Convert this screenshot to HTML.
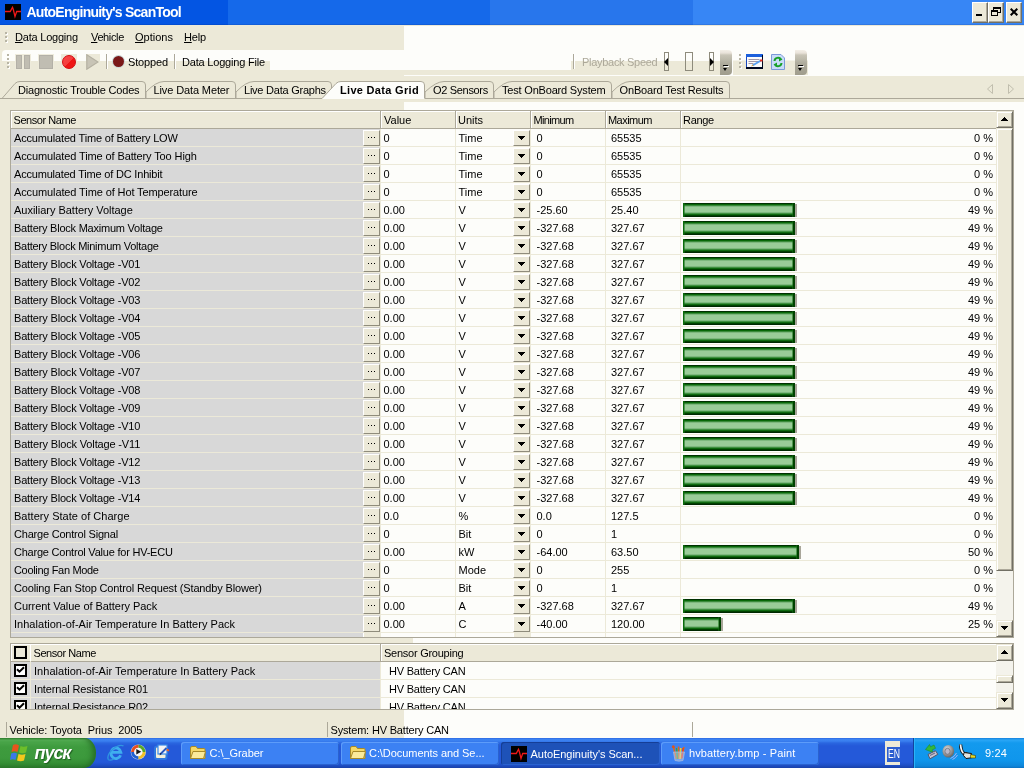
<!DOCTYPE html>
<html><head><meta charset="utf-8"><title>AutoEnginuity's ScanTool</title>
<style>
html,body{margin:0;padding:0;}
body{width:1024px;height:768px;overflow:hidden;position:relative;background:#ECE9D8;font-family:"Liberation Sans",sans-serif;font-size:11px;color:#000;}
#app,#app div,#app span,#app i,#app svg{position:absolute;}
.t{white-space:pre;line-height:13px;font-size:11px;}
.r{text-align:right;}
.w{color:#fff;}
.clip{overflow:hidden;}
.btn{background:#ECE9D8;box-sizing:border-box;border:1px solid;border-color:#fff #8F8C7C #8F8C7C #fff;}
.sb{border-color:#ECE9D8 #716F64 #716F64 #ECE9D8;box-shadow:inset 1px 1px 0 #fff,inset -1px -1px 0 #ACA899;}
.cap{border-color:#fff #716F64 #716F64 #fff;box-shadow:inset -1px -1px 0 #ACA899;}
.dots{left:4px;top:6px;width:1px;height:1px;background:#000;box-shadow:3px 0 0 #000,6px 0 0 #000;}
.dn{left:4px;top:5px;width:7px;height:4px;background:#000;clip-path:polygon(0 0,7px 0,7px 1px,6px 1px,6px 2px,5px 2px,5px 3px,4px 3px,4px 4px,3px 4px,3px 3px,2px 3px,2px 2px,1px 2px,1px 1px,0 1px);}
.up{left:4px;top:5px;width:7px;height:4px;background:#000;clip-path:polygon(3px 0,4px 0,4px 1px,5px 1px,5px 2px,6px 2px,6px 3px,7px 3px,7px 4px,0 4px,0 3px,1px 3px,1px 2px,2px 2px,2px 1px,3px 1px);}
.bar{height:14px;background:linear-gradient(#003000 0,#003000 1px,#086808 1px,#086808 2px,#3A8A3A 2px,#3A8A3A 3px,#7DB87D 3px,#7DB87D 4px,#9ACC98 4px,#9ACC98 9px,#7DB87D 9px,#7DB87D 10px,#3F8F3F 10px,#3F8F3F 11px,#0F6A0F 11px,#0F6A0F 12px,#004000 12px,#004000 13px,#002800 13px);box-shadow:inset 1px 0 0 #0A6A0A,inset 2px 0 0 rgba(20,110,20,0.55),inset -2px 0 0 #004200,inset -3px 0 0 rgba(20,110,20,0.55);}
.bar:after{content:"";position:absolute;left:100%;top:1px;width:2px;height:13px;background:#A9A69A;}
.cb{width:13px;height:13px;box-sizing:border-box;border:2px solid #000;}
.cb svg{left:0;top:0;}
.track{background-image:repeating-conic-gradient(#fff 0 25%,#ECE9D8 0 50%);background-size:2px 2px;}
.tb{top:742px;height:23px;border-radius:3px;background:#3C81F3;box-shadow:inset 1px 1px 0 #5D9CFA,inset -1px -1px 0 #2A62CF;}
.tb .t{color:#fff;top:5px;}
#app{left:0;top:0;width:1024px;height:768px;overflow:hidden;will-change:transform;}
</style></head><body><div id="app">
<!-- white glitch areas -->
<div style="left:404px;top:26px;width:620px;height:50px;background:#FDFDFA"></div>
<div style="left:404px;top:102px;width:620px;height:636px;background:#FDFDFA"></div>

<div style="left:404px;top:638px;width:9px;height:5px;background:#ECE9D8"></div>
<!-- title bar -->
<div style="left:0;top:0;width:1024px;height:25px;background:linear-gradient(90deg,#0355E3 0,#0355E3 228px,#1569EA 228px,#1569EA 490px,#2876EC 490px,#2876EC 693px,#3786F5 693px);box-shadow:inset 0 -1px 0 rgba(0,0,60,0.10)"></div>
<svg style="left:5px;top:4px" width="16" height="16" viewBox="0 0 16 16"><rect width="16" height="16" fill="#000"></rect><path d="M0 7.500 H5.200 L7.500 3.400 L8.300 5.500 L10 12.500 L11.700 7.500 H16" stroke="#F01818" stroke-width="1.3" fill="none"></path></svg>
<span class="t w" style="left: 26.5px; top: 4px; font-size: 14px; line-height: 16px; font-weight: bold; letter-spacing: -0.759px;">AutoEnginuity's ScanTool</span>
<div class="btn cap" style="left:972px;top:2px;width:16px;height:21px"><div style="left:3px;top:11px;width:6px;height:2px;background:#000"></div></div>
<div class="btn cap" style="left:988px;top:2px;width:16px;height:21px">
 <div style="left:4px;top:4px;width:8px;height:6px;box-sizing:border-box;border:1px solid #000;border-top-width:2px"></div>
 <div style="left:2px;top:7px;width:7px;height:6px;box-sizing:border-box;border:1px solid #000;border-top-width:2px;background:#ECE9D8"></div>
</div>
<div class="btn cap" style="left:1006px;top:2px;width:16px;height:21px"><svg style="left:3px;top:5px" width="8" height="8" viewBox="0 0 8 8"><path d="M0.7 0.7 L7.3 7.3 M7.3 0.7 L0.7 7.3" stroke="#000" stroke-width="2"></path></svg></div>

<!-- menu bar -->
<div style="left:5px;top:32px;width:2px;height:2px;background:#B8B5A5;box-shadow:0 4px 0 #B8B5A5,0 8px 0 #B8B5A5,1px 1px 0 #fff,1px 5px 0 #fff,1px 9px 0 #fff"></div>
<span class="t" style="left: 15px; top: 31px; letter-spacing: -0.213px;"><u>D</u>ata Logging</span>
<span class="t" style="left: 91px; top: 31px; letter-spacing: -0.369px;"><u>V</u>ehicle</span>
<span class="t" style="left: 135px; top: 31px; letter-spacing: -0.003px;"><u>O</u>ptions</span>
<span class="t" style="left: 184px; top: 31px; letter-spacing: -0.185px;"><u>H</u>elp</span>

<!-- toolbar -->
<div style="left:2px;top:50px;width:731px;height:11px;background:#FDFDFA;border-radius:4px 0 0 0"></div>
<div style="left:270px;top:50px;width:301px;height:20px;background:#FDFDFA"></div>
<div style="left:571px;top:61px;width:150px;height:14px;background:#ECE9D8"></div>
<div style="left:404px;top:70px;width:167px;height:5px;background:#ECE9D8"></div>
<div style="left:7px;top:54px;width:2px;height:2px;background:#B8B5A5;box-shadow:0 4px 0 #B8B5A5,0 8px 0 #B8B5A5,0 12px 0 #B8B5A5,1px 1px 0 #fff,1px 5px 0 #fff,1px 9px 0 #fff,1px 13px 0 #fff"></div>
<!-- pause -->
<div style="left:15px;top:54px;width:16px;height:16px;background:#EEEBDB"></div>
<div style="left:38px;top:54px;width:16px;height:16px;background:#EEEBDB"></div>
<div style="left:16px;top:55px;width:6px;height:14px;background:#C0BDB2;border:1px solid #B3B0A7;box-sizing:border-box"></div>
<div style="left:24px;top:55px;width:6px;height:14px;background:#C0BDB2;border:1px solid #B3B0A7;box-sizing:border-box"></div>
<!-- stop -->
<div style="left:39px;top:55px;width:14px;height:14px;background:#C0BDB2;border:1px solid #B3B0A7;box-sizing:border-box"></div>
<!-- record -->
<div style="left:61px;top:54px;width:16px;height:15px;background:#ECE9D8"></div>
<div style="left:62px;top:55px;width:14px;height:14px;border-radius:50%;box-sizing:border-box;border:1.500px solid #D2090F;background:linear-gradient(135deg,#F84848 0,#F43C3C 50%,#EE1414 52%,#F01818 100%)"></div>
<!-- play -->
<div style="left:86px;top:54px;width:14px;height:16px;background:#ECE9D8"></div>
<svg style="left:86px;top:54px" width="13" height="16" viewBox="0 0 13 16"><path d="M0.8 0.8 L12 8 L0.8 15.2 Z" fill="#C8C4B6" stroke="#B5B1A2" stroke-width="1.2"></path></svg>
<div style="left:106px;top:54px;width:1px;height:15px;background:#ACA899"></div>
<div style="left:107px;top:54px;width:1px;height:15px;background:#fff"></div>
<div style="left:113px;top:56px;width:11px;height:11px;border-radius:50%;background:#7A1818;box-shadow:0 0 0 1px #C9D6D6"></div>
<span class="t" style="left: 128px; top: 56px; letter-spacing: -0.155px;">Stopped</span>
<div style="left:174px;top:54px;width:1px;height:15px;background:#ACA899"></div>
<div style="left:175px;top:54px;width:1px;height:15px;background:#fff"></div>
<span class="t" style="left: 182px; top: 56px; letter-spacing: -0.196px;">Data Logging File</span>
<!-- playback -->
<div style="left:573px;top:54px;width:1px;height:15px;background:#ACA899"></div>
<div style="left:574px;top:54px;width:1px;height:15px;background:#fff"></div>
<span class="t" style="left: 582px; top: 56px; color: rgb(172, 168, 153); letter-spacing: -0.293px;">Playback Speed</span>
<div style="left:664px;top:52px;width:5px;height:19px;box-sizing:border-box;border:1px solid #8E8B7C"></div>
<div style="left:664px;top:58px;width:0;height:0;border:4px solid transparent;border-right:4px solid #000;border-left:0"></div>
<div style="left:685px;top:52px;width:8px;height:19px;box-sizing:border-box;border:1px solid #8E8B7C"></div>
<div style="left:709px;top:52px;width:5px;height:19px;box-sizing:border-box;border:1px solid #8E8B7C"></div>
<div style="left:710px;top:58px;width:0;height:0;border:4px solid transparent;border-left:4px solid #000;border-right:0"></div>
<!-- chevrons -->
<div style="left:720px;top:50px;width:12px;height:25px;border-radius:0 4px 4px 0;background:linear-gradient(#F3EFE7 0,#E9E2D9 3px,#C9C5B7 5px,#BAB7A8 10px,#ADAA9B 14px,#A09D8D 100%)"></div>
<div style="left:723px;top:65px;width:5px;height:1px;background:#000;box-shadow:1px 1px 0 #fff"></div>
<div style="left:723px;top:68px;width:0;height:0;border:2.5px solid transparent;border-top:3px solid #000;border-bottom:0"></div>
<div style="left:733px;top:50px;width:75px;height:25px;border-radius:4px 0 0 0;background:linear-gradient(#FDFDFA,#FDFDFA 10px,#ECE9D8 11px)"></div>
<div style="left:739px;top:54px;width:2px;height:2px;background:#B8B5A5;box-shadow:0 4px 0 #B8B5A5,0 8px 0 #B8B5A5,0 12px 0 #B8B5A5,1px 1px 0 #fff,1px 5px 0 #fff,1px 9px 0 #fff,1px 13px 0 #fff"></div>
<!-- icon 1 -->
<svg style="left:746px;top:54px" width="17" height="15" viewBox="0 0 17 15"><rect x="0.500" y="0.500" width="16" height="14" fill="#FBFBFB" stroke="#1848C0"></rect><rect x="0" y="0" width="17" height="3" fill="#1C60DC"></rect><rect x="0" y="13" width="17" height="2" fill="#000820"></rect><rect x="16" y="1" width="1" height="14" fill="#000820"></rect><path d="M2.500 5.500h11M2.500 7.500h10M2.500 9.500h5" stroke="#A098A8" stroke-width="1"></path><path d="M6.500 11.500 L15 6.500" stroke="#58A0F0" stroke-width="2"></path><path d="M5 12.500 l2.500 -1 l-1 -1z" fill="#E8A020"></path><rect x="14" y="5.500" width="2.500" height="2" fill="#E83020"></rect></svg>
<!-- icon 2 -->
<svg style="left:771px;top:54px" width="14" height="16" viewBox="0 0 14 16"><path d="M0.5 0.5 H10 L13.5 4 V15.5 H0.5 Z" fill="#C9DCF8" stroke="#7C9AD8"></path><path d="M3.5 7 A3.5 3.5 0 0 1 10 5.5 M10.5 9 A3.5 3.5 0 0 1 4 10.5" stroke="#18A028" stroke-width="2" fill="none"></path><path d="M8 3 L11.5 5.5 L8 7.5Z M6 8.5 L2.5 10.5 L6 13Z" fill="#18A028"></path></svg>
<div style="left:795px;top:50px;width:12px;height:25px;border-radius:0 4px 4px 0;background:linear-gradient(#F3EFE7 0,#E9E2D9 3px,#C9C5B7 5px,#BAB7A8 10px,#ADAA9B 14px,#A09D8D 100%)"></div>
<div style="left:798px;top:65px;width:5px;height:1px;background:#000;box-shadow:1px 1px 0 #fff"></div>
<div style="left:798px;top:68px;width:0;height:0;border:2.5px solid transparent;border-top:3px solid #000;border-bottom:0"></div>

<!-- tabs -->
<svg style="left:0;top:76px" width="1024" height="26" viewBox="0 76 1024 26">
 <g fill="#ECE9D8" stroke="#ACA899" stroke-width="1">
  <path d="M729.5 98.5 V85 Q729.5 81.500 726 81.500 H630 Q622 81.500 612 92 V98.500"></path>
  <path d="M611.5 98.5 V85 Q611.500 81.500 608 81.500 H512 Q504 81.500 494 92 V98.500"></path>
  <path d="M493.5 98.5 V85 Q493.500 81.500 490 81.500 H444 Q436 81.500 425 92 V98.500"></path>
  <path d="M146 98.500 V92 Q156 81.500 164 81.500 H232 Q235.500 81.500 235.500 85 V98.500"></path>
  <path d="M236 98.500 V92 Q246 81.500 254 81.500 H328 Q331.500 81.500 331.500 85 V98.500"></path>
  <path d="M0 98.500 H2 L15 83.500 Q17 81.500 20 81.500 H142 Q145.500 81.500 145.500 85 V98.500"></path>
 </g>
 <path d="M0 98.500 H322 M425 98.500 H1024" stroke="#ACA899" fill="none"></path>
 <path d="M322 99 L336 83.500 Q338 81.500 341 81.500 H421 Q424.500 81.500 424.500 85 V99 Z" fill="#FDFDFA" stroke="none"></path>
 <path d="M322 98.500 L336 83.500 Q338 81.500 341 81.500 H421 Q424.500 81.500 424.500 85 V98.500" fill="none" stroke="#ACA899"></path>
 <path d="M992.500 84.500 V93.500 L987.500 89 Z M1008.500 84.500 V93.500 L1013.500 89 Z" fill="none" stroke="#C1BEAE"></path>
</svg>
<span class="t" style="left: 18px; top: 84px; letter-spacing: -0.19px;">Diagnostic Trouble Codes</span>
<span class="t" style="left: 153.5px; top: 84px; letter-spacing: -0.117px;">Live Data Meter</span>
<span class="t" style="left: 244px; top: 84px; letter-spacing: -0.232px;">Live Data Graphs</span>
<span class="t" style="left: 340px; top: 84px; font-weight: bold; letter-spacing: 0.309px;">Live Data Grid</span>
<span class="t" style="left: 433px; top: 84px; letter-spacing: -0.319px;">O2 Sensors</span>
<span class="t" style="left: 502px; top: 84px; letter-spacing: -0.189px;">Test OnBoard System</span>
<span class="t" style="left: 619.5px; top: 84px; letter-spacing: -0.145px;">OnBoard Test Results</span>

<!-- main grid -->
<div style="left:10px;top:110px;width:1004px;height:528px;background:#ECE9D8;border:1px solid #ACA899;box-sizing:border-box;"></div>
<div style="left:11px;top:111px;width:985px;height:17px;background:#ECE9D8;border-top:1px solid #fff;border-left:1px solid #fff;box-sizing:border-box;"></div>
<div style="left:11px;top:128px;width:985px;height:1px;background:#ACA899;"></div>
<div style="left:11px;top:129px;width:369px;height:17px;background:#D8D8D8;"></div>
<div style="left:381px;top:129px;width:615px;height:17px;background:#FDFDFA;"></div>
<div class="btn" style="left:363px;top:130px;width:17px;height:16px"><i class="dots"></i></div>
<div class="btn" style="left:513px;top:130px;width:17px;height:16px"><i class="dn"></i></div>
<span class="t" style="left: 14px; top: 132px; letter-spacing: -0.162px;">Accumulated Time of Battery LOW</span>
<span class="t" style="left:383.5px;top:132px;">0</span>
<span class="t" style="left:458.5px;top:132px;">Time</span>
<span class="t" style="left:536.5px;top:132px;">0</span>
<span class="t" style="left:611px;top:132px;">65535</span>
<span class="t r" style="left:930px;top:132px;width:63px">0 %</span>
<div style="left:11px;top:147px;width:369px;height:17px;background:#D8D8D8;"></div>
<div style="left:381px;top:147px;width:615px;height:17px;background:#FDFDFA;"></div>
<div class="btn" style="left:363px;top:148px;width:17px;height:16px"><i class="dots"></i></div>
<div class="btn" style="left:513px;top:148px;width:17px;height:16px"><i class="dn"></i></div>
<span class="t" style="left: 14px; top: 150px; letter-spacing: -0.116px;">Accumulated Time of Battery Too High</span>
<span class="t" style="left:383.5px;top:150px;">0</span>
<span class="t" style="left:458.5px;top:150px;">Time</span>
<span class="t" style="left:536.5px;top:150px;">0</span>
<span class="t" style="left:611px;top:150px;">65535</span>
<span class="t r" style="left:930px;top:150px;width:63px">0 %</span>
<div style="left:11px;top:165px;width:369px;height:17px;background:#D8D8D8;"></div>
<div style="left:381px;top:165px;width:615px;height:17px;background:#FDFDFA;"></div>
<div class="btn" style="left:363px;top:166px;width:17px;height:16px"><i class="dots"></i></div>
<div class="btn" style="left:513px;top:166px;width:17px;height:16px"><i class="dn"></i></div>
<span class="t" style="left: 14px; top: 168px; letter-spacing: -0.189px;">Accumulated Time of DC Inhibit</span>
<span class="t" style="left:383.5px;top:168px;">0</span>
<span class="t" style="left:458.5px;top:168px;">Time</span>
<span class="t" style="left:536.5px;top:168px;">0</span>
<span class="t" style="left:611px;top:168px;">65535</span>
<span class="t r" style="left:930px;top:168px;width:63px">0 %</span>
<div style="left:11px;top:183px;width:369px;height:17px;background:#D8D8D8;"></div>
<div style="left:381px;top:183px;width:615px;height:17px;background:#FDFDFA;"></div>
<div class="btn" style="left:363px;top:184px;width:17px;height:16px"><i class="dots"></i></div>
<div class="btn" style="left:513px;top:184px;width:17px;height:16px"><i class="dn"></i></div>
<span class="t" style="left: 14px; top: 186px; letter-spacing: -0.111px;">Accumulated Time of Hot Temperature</span>
<span class="t" style="left:383.5px;top:186px;">0</span>
<span class="t" style="left:458.5px;top:186px;">Time</span>
<span class="t" style="left:536.5px;top:186px;">0</span>
<span class="t" style="left:611px;top:186px;">65535</span>
<span class="t r" style="left:930px;top:186px;width:63px">0 %</span>
<div style="left:11px;top:201px;width:369px;height:17px;background:#D8D8D8;"></div>
<div style="left:381px;top:201px;width:615px;height:17px;background:#FDFDFA;"></div>
<div class="btn" style="left:363px;top:202px;width:17px;height:16px"><i class="dots"></i></div>
<div class="btn" style="left:513px;top:202px;width:17px;height:16px"><i class="dn"></i></div>
<span class="t" style="left: 14px; top: 204px; letter-spacing: -0.017px;">Auxiliary Battery Voltage</span>
<span class="t" style="left:383.5px;top:204px;">0.00</span>
<span class="t" style="left:458.5px;top:204px;">V</span>
<span class="t" style="left:536.5px;top:204px;">-25.60</span>
<span class="t" style="left:611px;top:204px;">25.40</span>
<span class="t r" style="left:930px;top:204px;width:63px">49 %</span>
<div class="bar" style="left:683px;top:203px;width:112px"></div>
<div style="left:11px;top:219px;width:369px;height:17px;background:#D8D8D8;"></div>
<div style="left:381px;top:219px;width:615px;height:17px;background:#FDFDFA;"></div>
<div class="btn" style="left:363px;top:220px;width:17px;height:16px"><i class="dots"></i></div>
<div class="btn" style="left:513px;top:220px;width:17px;height:16px"><i class="dn"></i></div>
<span class="t" style="left: 14px; top: 222px; letter-spacing: -0.227px;">Battery Block Maximum Voltage</span>
<span class="t" style="left:383.5px;top:222px;">0.00</span>
<span class="t" style="left:458.5px;top:222px;">V</span>
<span class="t" style="left:536.5px;top:222px;">-327.68</span>
<span class="t" style="left:611px;top:222px;">327.67</span>
<span class="t r" style="left:930px;top:222px;width:63px">49 %</span>
<div class="bar" style="left:683px;top:221px;width:112px"></div>
<div style="left:11px;top:237px;width:369px;height:17px;background:#D8D8D8;"></div>
<div style="left:381px;top:237px;width:615px;height:17px;background:#FDFDFA;"></div>
<div class="btn" style="left:363px;top:238px;width:17px;height:16px"><i class="dots"></i></div>
<div class="btn" style="left:513px;top:238px;width:17px;height:16px"><i class="dn"></i></div>
<span class="t" style="left: 14px; top: 240px; letter-spacing: -0.263px;">Battery Block Minimum Voltage</span>
<span class="t" style="left:383.5px;top:240px;">0.00</span>
<span class="t" style="left:458.5px;top:240px;">V</span>
<span class="t" style="left:536.5px;top:240px;">-327.68</span>
<span class="t" style="left:611px;top:240px;">327.67</span>
<span class="t r" style="left:930px;top:240px;width:63px">49 %</span>
<div class="bar" style="left:683px;top:239px;width:112px"></div>
<div style="left:11px;top:255px;width:369px;height:17px;background:#D8D8D8;"></div>
<div style="left:381px;top:255px;width:615px;height:17px;background:#FDFDFA;"></div>
<div class="btn" style="left:363px;top:256px;width:17px;height:16px"><i class="dots"></i></div>
<div class="btn" style="left:513px;top:256px;width:17px;height:16px"><i class="dn"></i></div>
<span class="t" style="left: 14px; top: 258px; letter-spacing: -0.179px;">Battery Block Voltage -V01</span>
<span class="t" style="left:383.5px;top:258px;">0.00</span>
<span class="t" style="left:458.5px;top:258px;">V</span>
<span class="t" style="left:536.5px;top:258px;">-327.68</span>
<span class="t" style="left:611px;top:258px;">327.67</span>
<span class="t r" style="left:930px;top:258px;width:63px">49 %</span>
<div class="bar" style="left:683px;top:257px;width:112px"></div>
<div style="left:11px;top:273px;width:369px;height:17px;background:#D8D8D8;"></div>
<div style="left:381px;top:273px;width:615px;height:17px;background:#FDFDFA;"></div>
<div class="btn" style="left:363px;top:274px;width:17px;height:16px"><i class="dots"></i></div>
<div class="btn" style="left:513px;top:274px;width:17px;height:16px"><i class="dn"></i></div>
<span class="t" style="left: 14px; top: 276px; letter-spacing: -0.179px;">Battery Block Voltage -V02</span>
<span class="t" style="left:383.5px;top:276px;">0.00</span>
<span class="t" style="left:458.5px;top:276px;">V</span>
<span class="t" style="left:536.5px;top:276px;">-327.68</span>
<span class="t" style="left:611px;top:276px;">327.67</span>
<span class="t r" style="left:930px;top:276px;width:63px">49 %</span>
<div class="bar" style="left:683px;top:275px;width:112px"></div>
<div style="left:11px;top:291px;width:369px;height:17px;background:#D8D8D8;"></div>
<div style="left:381px;top:291px;width:615px;height:17px;background:#FDFDFA;"></div>
<div class="btn" style="left:363px;top:292px;width:17px;height:16px"><i class="dots"></i></div>
<div class="btn" style="left:513px;top:292px;width:17px;height:16px"><i class="dn"></i></div>
<span class="t" style="left: 14px; top: 294px; letter-spacing: -0.179px;">Battery Block Voltage -V03</span>
<span class="t" style="left:383.5px;top:294px;">0.00</span>
<span class="t" style="left:458.5px;top:294px;">V</span>
<span class="t" style="left:536.5px;top:294px;">-327.68</span>
<span class="t" style="left:611px;top:294px;">327.67</span>
<span class="t r" style="left:930px;top:294px;width:63px">49 %</span>
<div class="bar" style="left:683px;top:293px;width:112px"></div>
<div style="left:11px;top:309px;width:369px;height:17px;background:#D8D8D8;"></div>
<div style="left:381px;top:309px;width:615px;height:17px;background:#FDFDFA;"></div>
<div class="btn" style="left:363px;top:310px;width:17px;height:16px"><i class="dots"></i></div>
<div class="btn" style="left:513px;top:310px;width:17px;height:16px"><i class="dn"></i></div>
<span class="t" style="left: 14px; top: 312px; letter-spacing: -0.179px;">Battery Block Voltage -V04</span>
<span class="t" style="left:383.5px;top:312px;">0.00</span>
<span class="t" style="left:458.5px;top:312px;">V</span>
<span class="t" style="left:536.5px;top:312px;">-327.68</span>
<span class="t" style="left:611px;top:312px;">327.67</span>
<span class="t r" style="left:930px;top:312px;width:63px">49 %</span>
<div class="bar" style="left:683px;top:311px;width:112px"></div>
<div style="left:11px;top:327px;width:369px;height:17px;background:#D8D8D8;"></div>
<div style="left:381px;top:327px;width:615px;height:17px;background:#FDFDFA;"></div>
<div class="btn" style="left:363px;top:328px;width:17px;height:16px"><i class="dots"></i></div>
<div class="btn" style="left:513px;top:328px;width:17px;height:16px"><i class="dn"></i></div>
<span class="t" style="left: 14px; top: 330px; letter-spacing: -0.179px;">Battery Block Voltage -V05</span>
<span class="t" style="left:383.5px;top:330px;">0.00</span>
<span class="t" style="left:458.5px;top:330px;">V</span>
<span class="t" style="left:536.5px;top:330px;">-327.68</span>
<span class="t" style="left:611px;top:330px;">327.67</span>
<span class="t r" style="left:930px;top:330px;width:63px">49 %</span>
<div class="bar" style="left:683px;top:329px;width:112px"></div>
<div style="left:11px;top:345px;width:369px;height:17px;background:#D8D8D8;"></div>
<div style="left:381px;top:345px;width:615px;height:17px;background:#FDFDFA;"></div>
<div class="btn" style="left:363px;top:346px;width:17px;height:16px"><i class="dots"></i></div>
<div class="btn" style="left:513px;top:346px;width:17px;height:16px"><i class="dn"></i></div>
<span class="t" style="left: 14px; top: 348px; letter-spacing: -0.179px;">Battery Block Voltage -V06</span>
<span class="t" style="left:383.5px;top:348px;">0.00</span>
<span class="t" style="left:458.5px;top:348px;">V</span>
<span class="t" style="left:536.5px;top:348px;">-327.68</span>
<span class="t" style="left:611px;top:348px;">327.67</span>
<span class="t r" style="left:930px;top:348px;width:63px">49 %</span>
<div class="bar" style="left:683px;top:347px;width:112px"></div>
<div style="left:11px;top:363px;width:369px;height:17px;background:#D8D8D8;"></div>
<div style="left:381px;top:363px;width:615px;height:17px;background:#FDFDFA;"></div>
<div class="btn" style="left:363px;top:364px;width:17px;height:16px"><i class="dots"></i></div>
<div class="btn" style="left:513px;top:364px;width:17px;height:16px"><i class="dn"></i></div>
<span class="t" style="left: 14px; top: 366px; letter-spacing: -0.179px;">Battery Block Voltage -V07</span>
<span class="t" style="left:383.5px;top:366px;">0.00</span>
<span class="t" style="left:458.5px;top:366px;">V</span>
<span class="t" style="left:536.5px;top:366px;">-327.68</span>
<span class="t" style="left:611px;top:366px;">327.67</span>
<span class="t r" style="left:930px;top:366px;width:63px">49 %</span>
<div class="bar" style="left:683px;top:365px;width:112px"></div>
<div style="left:11px;top:381px;width:369px;height:17px;background:#D8D8D8;"></div>
<div style="left:381px;top:381px;width:615px;height:17px;background:#FDFDFA;"></div>
<div class="btn" style="left:363px;top:382px;width:17px;height:16px"><i class="dots"></i></div>
<div class="btn" style="left:513px;top:382px;width:17px;height:16px"><i class="dn"></i></div>
<span class="t" style="left: 14px; top: 384px; letter-spacing: -0.179px;">Battery Block Voltage -V08</span>
<span class="t" style="left:383.5px;top:384px;">0.00</span>
<span class="t" style="left:458.5px;top:384px;">V</span>
<span class="t" style="left:536.5px;top:384px;">-327.68</span>
<span class="t" style="left:611px;top:384px;">327.67</span>
<span class="t r" style="left:930px;top:384px;width:63px">49 %</span>
<div class="bar" style="left:683px;top:383px;width:112px"></div>
<div style="left:11px;top:399px;width:369px;height:17px;background:#D8D8D8;"></div>
<div style="left:381px;top:399px;width:615px;height:17px;background:#FDFDFA;"></div>
<div class="btn" style="left:363px;top:400px;width:17px;height:16px"><i class="dots"></i></div>
<div class="btn" style="left:513px;top:400px;width:17px;height:16px"><i class="dn"></i></div>
<span class="t" style="left: 14px; top: 402px; letter-spacing: -0.179px;">Battery Block Voltage -V09</span>
<span class="t" style="left:383.5px;top:402px;">0.00</span>
<span class="t" style="left:458.5px;top:402px;">V</span>
<span class="t" style="left:536.5px;top:402px;">-327.68</span>
<span class="t" style="left:611px;top:402px;">327.67</span>
<span class="t r" style="left:930px;top:402px;width:63px">49 %</span>
<div class="bar" style="left:683px;top:401px;width:112px"></div>
<div style="left:11px;top:417px;width:369px;height:17px;background:#D8D8D8;"></div>
<div style="left:381px;top:417px;width:615px;height:17px;background:#FDFDFA;"></div>
<div class="btn" style="left:363px;top:418px;width:17px;height:16px"><i class="dots"></i></div>
<div class="btn" style="left:513px;top:418px;width:17px;height:16px"><i class="dn"></i></div>
<span class="t" style="left: 14px; top: 420px; letter-spacing: -0.179px;">Battery Block Voltage -V10</span>
<span class="t" style="left:383.5px;top:420px;">0.00</span>
<span class="t" style="left:458.5px;top:420px;">V</span>
<span class="t" style="left:536.5px;top:420px;">-327.68</span>
<span class="t" style="left:611px;top:420px;">327.67</span>
<span class="t r" style="left:930px;top:420px;width:63px">49 %</span>
<div class="bar" style="left:683px;top:419px;width:112px"></div>
<div style="left:11px;top:435px;width:369px;height:17px;background:#D8D8D8;"></div>
<div style="left:381px;top:435px;width:615px;height:17px;background:#FDFDFA;"></div>
<div class="btn" style="left:363px;top:436px;width:17px;height:16px"><i class="dots"></i></div>
<div class="btn" style="left:513px;top:436px;width:17px;height:16px"><i class="dn"></i></div>
<span class="t" style="left: 14px; top: 438px; letter-spacing: -0.148px;">Battery Block Voltage -V11</span>
<span class="t" style="left:383.5px;top:438px;">0.00</span>
<span class="t" style="left:458.5px;top:438px;">V</span>
<span class="t" style="left:536.5px;top:438px;">-327.68</span>
<span class="t" style="left:611px;top:438px;">327.67</span>
<span class="t r" style="left:930px;top:438px;width:63px">49 %</span>
<div class="bar" style="left:683px;top:437px;width:112px"></div>
<div style="left:11px;top:453px;width:369px;height:17px;background:#D8D8D8;"></div>
<div style="left:381px;top:453px;width:615px;height:17px;background:#FDFDFA;"></div>
<div class="btn" style="left:363px;top:454px;width:17px;height:16px"><i class="dots"></i></div>
<div class="btn" style="left:513px;top:454px;width:17px;height:16px"><i class="dn"></i></div>
<span class="t" style="left: 14px; top: 456px; letter-spacing: -0.179px;">Battery Block Voltage -V12</span>
<span class="t" style="left:383.5px;top:456px;">0.00</span>
<span class="t" style="left:458.5px;top:456px;">V</span>
<span class="t" style="left:536.5px;top:456px;">-327.68</span>
<span class="t" style="left:611px;top:456px;">327.67</span>
<span class="t r" style="left:930px;top:456px;width:63px">49 %</span>
<div class="bar" style="left:683px;top:455px;width:112px"></div>
<div style="left:11px;top:471px;width:369px;height:17px;background:#D8D8D8;"></div>
<div style="left:381px;top:471px;width:615px;height:17px;background:#FDFDFA;"></div>
<div class="btn" style="left:363px;top:472px;width:17px;height:16px"><i class="dots"></i></div>
<div class="btn" style="left:513px;top:472px;width:17px;height:16px"><i class="dn"></i></div>
<span class="t" style="left: 14px; top: 474px; letter-spacing: -0.179px;">Battery Block Voltage -V13</span>
<span class="t" style="left:383.5px;top:474px;">0.00</span>
<span class="t" style="left:458.5px;top:474px;">V</span>
<span class="t" style="left:536.5px;top:474px;">-327.68</span>
<span class="t" style="left:611px;top:474px;">327.67</span>
<span class="t r" style="left:930px;top:474px;width:63px">49 %</span>
<div class="bar" style="left:683px;top:473px;width:112px"></div>
<div style="left:11px;top:489px;width:369px;height:17px;background:#D8D8D8;"></div>
<div style="left:381px;top:489px;width:615px;height:17px;background:#FDFDFA;"></div>
<div class="btn" style="left:363px;top:490px;width:17px;height:16px"><i class="dots"></i></div>
<div class="btn" style="left:513px;top:490px;width:17px;height:16px"><i class="dn"></i></div>
<span class="t" style="left: 14px; top: 492px; letter-spacing: -0.179px;">Battery Block Voltage -V14</span>
<span class="t" style="left:383.5px;top:492px;">0.00</span>
<span class="t" style="left:458.5px;top:492px;">V</span>
<span class="t" style="left:536.5px;top:492px;">-327.68</span>
<span class="t" style="left:611px;top:492px;">327.67</span>
<span class="t r" style="left:930px;top:492px;width:63px">49 %</span>
<div class="bar" style="left:683px;top:491px;width:112px"></div>
<div style="left:11px;top:507px;width:369px;height:17px;background:#D8D8D8;"></div>
<div style="left:381px;top:507px;width:615px;height:17px;background:#FDFDFA;"></div>
<div class="btn" style="left:363px;top:508px;width:17px;height:16px"><i class="dots"></i></div>
<div class="btn" style="left:513px;top:508px;width:17px;height:16px"><i class="dn"></i></div>
<span class="t" style="left: 14px; top: 510px; letter-spacing: 0.028px;">Battery State of Charge</span>
<span class="t" style="left:383.5px;top:510px;">0.0</span>
<span class="t" style="left:458.5px;top:510px;">%</span>
<span class="t" style="left:536.5px;top:510px;">0.0</span>
<span class="t" style="left:611px;top:510px;">127.5</span>
<span class="t r" style="left:930px;top:510px;width:63px">0 %</span>
<div style="left:11px;top:525px;width:369px;height:17px;background:#D8D8D8;"></div>
<div style="left:381px;top:525px;width:615px;height:17px;background:#FDFDFA;"></div>
<div class="btn" style="left:363px;top:526px;width:17px;height:16px"><i class="dots"></i></div>
<div class="btn" style="left:513px;top:526px;width:17px;height:16px"><i class="dn"></i></div>
<span class="t" style="left: 14px; top: 528px; letter-spacing: -0.206px;">Charge Control Signal</span>
<span class="t" style="left:383.5px;top:528px;">0</span>
<span class="t" style="left:458.5px;top:528px;">Bit</span>
<span class="t" style="left:536.5px;top:528px;">0</span>
<span class="t" style="left:611px;top:528px;">1</span>
<span class="t r" style="left:930px;top:528px;width:63px">0 %</span>
<div style="left:11px;top:543px;width:369px;height:17px;background:#D8D8D8;"></div>
<div style="left:381px;top:543px;width:615px;height:17px;background:#FDFDFA;"></div>
<div class="btn" style="left:363px;top:544px;width:17px;height:16px"><i class="dots"></i></div>
<div class="btn" style="left:513px;top:544px;width:17px;height:16px"><i class="dn"></i></div>
<span class="t" style="left: 14px; top: 546px; letter-spacing: -0.219px;">Charge Control Value for HV-ECU</span>
<span class="t" style="left:383.5px;top:546px;">0.00</span>
<span class="t" style="left:458.5px;top:546px;">kW</span>
<span class="t" style="left:536.5px;top:546px;">-64.00</span>
<span class="t" style="left:611px;top:546px;">63.50</span>
<span class="t r" style="left:930px;top:546px;width:63px">50 %</span>
<div class="bar" style="left:683px;top:545px;width:116px"></div>
<div style="left:11px;top:561px;width:369px;height:17px;background:#D8D8D8;"></div>
<div style="left:381px;top:561px;width:615px;height:17px;background:#FDFDFA;"></div>
<div class="btn" style="left:363px;top:562px;width:17px;height:16px"><i class="dots"></i></div>
<div class="btn" style="left:513px;top:562px;width:17px;height:16px"><i class="dn"></i></div>
<span class="t" style="left: 14px; top: 564px; letter-spacing: -0.331px;">Cooling Fan Mode</span>
<span class="t" style="left:383.5px;top:564px;">0</span>
<span class="t" style="left:458.5px;top:564px;">Mode</span>
<span class="t" style="left:536.5px;top:564px;">0</span>
<span class="t" style="left:611px;top:564px;">255</span>
<span class="t r" style="left:930px;top:564px;width:63px">0 %</span>
<div style="left:11px;top:579px;width:369px;height:17px;background:#D8D8D8;"></div>
<div style="left:381px;top:579px;width:615px;height:17px;background:#FDFDFA;"></div>
<div class="btn" style="left:363px;top:580px;width:17px;height:16px"><i class="dots"></i></div>
<div class="btn" style="left:513px;top:580px;width:17px;height:16px"><i class="dn"></i></div>
<span class="t" style="left: 14px; top: 582px; letter-spacing: -0.146px;">Cooling Fan Stop Control Request (Standby Blower)</span>
<span class="t" style="left:383.5px;top:582px;">0</span>
<span class="t" style="left:458.5px;top:582px;">Bit</span>
<span class="t" style="left:536.5px;top:582px;">0</span>
<span class="t" style="left:611px;top:582px;">1</span>
<span class="t r" style="left:930px;top:582px;width:63px">0 %</span>
<div style="left:11px;top:597px;width:369px;height:17px;background:#D8D8D8;"></div>
<div style="left:381px;top:597px;width:615px;height:17px;background:#FDFDFA;"></div>
<div class="btn" style="left:363px;top:598px;width:17px;height:16px"><i class="dots"></i></div>
<div class="btn" style="left:513px;top:598px;width:17px;height:16px"><i class="dn"></i></div>
<span class="t" style="left: 14px; top: 600px; letter-spacing: -0.052px;">Current Value of Battery Pack</span>
<span class="t" style="left:383.5px;top:600px;">0.00</span>
<span class="t" style="left:458.5px;top:600px;">A</span>
<span class="t" style="left:536.5px;top:600px;">-327.68</span>
<span class="t" style="left:611px;top:600px;">327.67</span>
<span class="t r" style="left:930px;top:600px;width:63px">49 %</span>
<div class="bar" style="left:683px;top:599px;width:112px"></div>
<div style="left:11px;top:615px;width:369px;height:17px;background:#D8D8D8;"></div>
<div style="left:381px;top:615px;width:615px;height:17px;background:#FDFDFA;"></div>
<div class="btn" style="left:363px;top:616px;width:17px;height:16px"><i class="dots"></i></div>
<div class="btn" style="left:513px;top:616px;width:17px;height:16px"><i class="dn"></i></div>
<span class="t" style="left: 14px; top: 618px; letter-spacing: 0.027px;">Inhalation-of-Air Temperature In Battery Pack</span>
<span class="t" style="left:383.5px;top:618px;">0.00</span>
<span class="t" style="left:458.5px;top:618px;">C</span>
<span class="t" style="left:536.5px;top:618px;">-40.00</span>
<span class="t" style="left:611px;top:618px;">120.00</span>
<span class="t r" style="left:930px;top:618px;width:63px">25 %</span>
<div class="bar" style="left:683px;top:617px;width:38px"></div>
<div style="left:11px;top:633px;width:369px;height:4px;background:#D8D8D8;"></div>
<div style="left:381px;top:633px;width:615px;height:4px;background:#FDFDFA;"></div>
<div style="left:363px;top:633px;width:17px;height:4px;background:#ECE9D8;border-left:1px solid #fff;box-sizing:border-box;"></div>
<div style="left:513px;top:633px;width:17px;height:4px;background:#ECE9D8;border-left:1px solid #fff;box-sizing:border-box;"></div>
<div style="left:380px;top:111px;width:1px;height:17px;background:#ACA899;"></div>
<div style="left:381px;top:112px;width:1px;height:16px;background:#fff;"></div>
<div style="left:380px;top:129px;width:1px;height:508px;background:#ECE9D8;"></div>
<div style="left:455px;top:111px;width:1px;height:17px;background:#ACA899;"></div>
<div style="left:456px;top:112px;width:1px;height:16px;background:#fff;"></div>
<div style="left:455px;top:129px;width:1px;height:508px;background:#ECE9D8;"></div>
<div style="left:530px;top:111px;width:1px;height:17px;background:#ACA899;"></div>
<div style="left:531px;top:112px;width:1px;height:16px;background:#fff;"></div>
<div style="left:530px;top:129px;width:1px;height:508px;background:#ECE9D8;"></div>
<div style="left:605px;top:111px;width:1px;height:17px;background:#ACA899;"></div>
<div style="left:606px;top:112px;width:1px;height:16px;background:#fff;"></div>
<div style="left:605px;top:129px;width:1px;height:508px;background:#ECE9D8;"></div>
<div style="left:680px;top:111px;width:1px;height:17px;background:#ACA899;"></div>
<div style="left:681px;top:112px;width:1px;height:16px;background:#fff;"></div>
<div style="left:680px;top:129px;width:1px;height:508px;background:#ECE9D8;"></div>
<span class="t" style="left: 13.5px; top: 114px; letter-spacing: -0.442px;">Sensor Name</span>
<span class="t" style="left:384px;top:114px;">Value</span>
<span class="t" style="left:458px;top:114px;">Units</span>
<span class="t" style="left: 533.5px; top: 114px; letter-spacing: -0.675px;">Minimum</span>
<span class="t" style="left: 608px; top: 114px; letter-spacing: -0.539px;">Maximum</span>
<span class="t" style="left: 683px; top: 114px; letter-spacing: -0.304px;">Range</span>
<div class="track" style="left:996px;top:111px;width:17px;height:526px;background:#F4F3EC;"></div>
<div class="btn sb" style="left:996px;top:111px;width:17px;height:17px"><i class="up"></i></div>
<div class="btn sb" style="left:996px;top:128px;width:17px;height:443px"></div>
<div class="btn sb" style="left:996px;top:620px;width:17px;height:17px"><i class="dn" style="left:4px"></i></div>
<!-- second grid -->
<div style="left:10px;top:643px;width:1004px;height:67px;background:#ECE9D8;border:1px solid #ACA899;box-sizing:border-box;overflow:hidden;"></div>
<div style="left:11px;top:644px;width:985px;height:17px;background:#ECE9D8;border-top:1px solid #fff;border-left:1px solid #fff;box-sizing:border-box;"></div>
<div style="left:11px;top:661px;width:985px;height:1px;background:#ACA899;"></div>
<div style="left:11px;top:662px;width:369px;height:17px;background:#D8D8D8;"></div>
<div style="left:381px;top:662px;width:615px;height:17px;background:#FDFDFA;"></div>
<div class="clip" style="left:11px;top:662px;width:985px;height:17px"><div class="cb" style="left:3px;top:2px;background:#fff"><svg width="9" height="9" viewBox="0 0 9 9"><path d="M1 3.2 L3.5 5.7 L8 1.2" stroke="#000" stroke-width="2" fill="none"></path></svg></div><span class="t" style="left: 23px; top: 3px; letter-spacing: 0.029px;">Inhalation-of-Air Temperature In Battery Pack</span><span class="t" style="left: 378px; top: 3px; letter-spacing: -0.219px;">HV Battery CAN</span></div>
<div style="left:11px;top:680px;width:369px;height:17px;background:#D8D8D8;"></div>
<div style="left:381px;top:680px;width:615px;height:17px;background:#FDFDFA;"></div>
<div class="clip" style="left:11px;top:680px;width:985px;height:17px"><div class="cb" style="left:3px;top:2px;background:#fff"><svg width="9" height="9" viewBox="0 0 9 9"><path d="M1 3.2 L3.5 5.7 L8 1.2" stroke="#000" stroke-width="2" fill="none"></path></svg></div><span class="t" style="left: 23px; top: 3px; letter-spacing: -0.152px;">Internal Resistance R01</span><span class="t" style="left: 378px; top: 3px; letter-spacing: -0.219px;">HV Battery CAN</span></div>
<div style="left:11px;top:698px;width:369px;height:11px;background:#D8D8D8;"></div>
<div style="left:381px;top:698px;width:615px;height:11px;background:#FDFDFA;"></div>
<div class="clip" style="left:11px;top:698px;width:985px;height:11px"><div class="cb" style="left:3px;top:2px;background:#fff"><svg width="9" height="9" viewBox="0 0 9 9"><path d="M1 3.2 L3.5 5.7 L8 1.2" stroke="#000" stroke-width="2" fill="none"></path></svg></div><span class="t" style="left: 23px; top: 3px; letter-spacing: -0.152px;">Internal Resistance R02</span><span class="t" style="left: 378px; top: 3px; letter-spacing: -0.219px;">HV Battery CAN</span></div>
<div style="left:30px;top:645px;width:1px;height:64px;background:#ECE9D8;"></div>
<div style="left:30px;top:645px;width:1px;height:16px;background:#fff;"></div>
<div style="left:380px;top:644px;width:1px;height:17px;background:#ACA899;"></div>
<div style="left:381px;top:645px;width:1px;height:16px;background:#fff;"></div>
<div style="left:380px;top:662px;width:1px;height:47px;background:#ECE9D8;"></div>
<div class="cb" style="left:14px;top:646px"></div>
<span class="t" style="left: 33.5px; top: 647px; letter-spacing: -0.442px;">Sensor Name</span>
<span class="t" style="left: 384px; top: 647px; letter-spacing: -0.251px;">Sensor Grouping</span>
<div class="track" style="left:996px;top:644px;width:17px;height:65px;background:#F4F3EC;"></div>
<div class="btn sb" style="left:996px;top:644px;width:17px;height:17px"><i class="up"></i></div>
<div class="btn sb" style="left:996px;top:675px;width:17px;height:8px"></div>
<div class="btn sb" style="left:996px;top:692px;width:17px;height:17px"><i class="dn" style="left:4px"></i></div>

<!-- status bar -->
<div style="left:6px;top:722px;width:1px;height:15px;background:#ACA899"></div>
<div style="left:327px;top:722px;width:1px;height:15px;background:#ACA899"></div>
<div style="left:692px;top:722px;width:1px;height:15px;background:#ACA899"></div>
<span class="t" style="left: 9.5px; top: 724px; letter-spacing: -0.095px;">Vehicle: Toyota  Prius  2005</span>
<span class="t" style="left: 330.5px; top: 724px; letter-spacing: -0.176px;">System: HV Battery CAN</span>

<!-- taskbar -->
<div style="left:0;top:738px;width:1024px;height:30px;background:linear-gradient(#2E6AE2 0,#3B82F2 1.500px,#3A80F0 3px,#2A66E0 5px,#2459D9 8px,#2459D9 24px,#1F50C8 27px,#1941A8 30px)"></div>
<div style="left:0;top:738px;width:96px;height:30px;border-radius:0 12px 12px 0/0 15px 15px 0;background:linear-gradient(#2C7C2C 0,#55AE55 2px,#49A549 4px,#3E9B3E 9px,#3C993C 20px,#338C33 26px,#2A772A 30px);box-shadow:inset -6px 0 6px -3px #246B24"></div>
<svg style="left:10px;top:744px" width="20" height="18" viewBox="0 0 20 18"><path d="M3 1 Q6 -0.500 9 1.500 L7.500 8 Q4.500 6.500 1.500 8 Z" fill="#E8541C"></path><path d="M10.500 2 Q13.500 3.500 17.500 2 L16 8.500 Q12.500 10 9 8.500 Z" fill="#6DBE2A"></path><path d="M1.200 9.500 Q4 8 7 9.500 L5.500 16 Q2.500 14.500 0 16 Z" fill="#3A78E8"></path><path d="M8.500 10 Q12 11.500 15.500 10 L14 16.500 Q10.500 18 7 16.500 Z" fill="#F4C81C"></path></svg>
<span class="t w" style="left: 34.5px; top: 743px; font-size: 18px; line-height: 20px; font-weight: bold; font-style: italic; text-shadow: rgb(31, 95, 31) 1px 1px 1px; letter-spacing: -1.06px;">пуск</span>
<!-- quick launch -->
<svg style="left:107px;top:744px" width="18" height="18" viewBox="0 0 18 18"><path d="M13.600 11.200 A5 5.300 0 1 1 13.900 8.400 H5.200" fill="none" stroke="#3FAEEF" stroke-width="2.800"></path><path d="M1.200 15.500 Q-0.500 11 6 5 Q12 0 16.500 1.800" stroke="#2F96E0" stroke-width="1.300" fill="none"></path><path d="M1.200 15.500 Q3 17 7 15" stroke="#2F96E0" stroke-width="1.200" fill="none"></path></svg>
<svg style="left:130px;top:744px" width="17" height="17" viewBox="0 0 17 17"><circle cx="8.300" cy="8" r="7.600" fill="#D8D8E0"></circle><path d="M8.300 8 L8.300 0.800 A7.200 7.200 0 0 1 15.500 8Z" fill="#58A828"></path><path d="M8.300 8 L15.500 8 A7.200 7.200 0 0 1 8.300 15.200Z" fill="#F0C028"></path><path d="M8.300 8 L8.300 15.200 A7.200 7.200 0 0 1 1.100 8Z" fill="#2060D0"></path><path d="M8.300 8 L1.100 8 A7.200 7.200 0 0 1 8.300 0.800Z" fill="#E85020"></path><circle cx="8.300" cy="8" r="4.300" fill="#F4F4F8"></circle><path d="M6.300 5 L11.300 7.800 L6.300 10.600Z" fill="#181818"></path></svg>
<svg style="left:154px;top:744px" width="17" height="18" viewBox="0 0 17 18"><rect x="1" y="2.500" width="11.500" height="12.500" rx="2" fill="#F4F0D8" stroke="#2F78E0" stroke-width="2"></rect><rect x="4" y="1" width="9" height="9" fill="#F4F4F4" stroke="#3A8AE8" stroke-width="1.200"></rect><path d="M6 10.500 L12.500 4" stroke="#2858C0" stroke-width="1.800"></path><path d="M5.500 11.500 L7.500 9.500 L6.500 9 Z" fill="#181818"></path><path d="M13 4.500 L15.500 6 L14.500 7.500 L12.500 6.500Z" fill="#F06020"></path></svg>
<!-- task buttons -->
<div class="tb" style="left:181px;width:158px"><svg style="left:9px;top:3px" width="16" height="16" viewBox="0 0 16 16"><path d="M0.500 3 Q0.500 1.500 2 1.500 H6 L7.500 3.500 H14 Q15 3.500 15 4.500 V13.500 H0.500Z" fill="#F4D868" stroke="#A88A28"></path><path d="M0.500 13.500 L3 6.500 H15.500 L13.500 13.500Z" fill="#FBEA9A" stroke="#A88A28"></path></svg><span class="t" style="left: 28.5px; letter-spacing: -0.052px;">C:\_Graber</span></div>
<div class="tb" style="left:341px;width:158px"><svg style="left:9px;top:3px" width="16" height="16" viewBox="0 0 16 16"><path d="M0.500 3 Q0.500 1.500 2 1.500 H6 L7.500 3.500 H14 Q15 3.500 15 4.500 V13.500 H0.500Z" fill="#F4D868" stroke="#A88A28"></path><path d="M0.500 13.500 L3 6.500 H15.500 L13.500 13.500Z" fill="#FBEA9A" stroke="#A88A28"></path></svg><span class="t" style="left: 28px; letter-spacing: -0.063px;">C:\Documents and Se...</span></div>
<div class="tb" style="left:501px;width:159px;background:#1E52B8;box-shadow:inset 1px 1px 0 #153E96,inset -1px -1px 0 #2A62CF"><svg style="left:10px;top:4px" width="16" height="16" viewBox="0 0 16 16"><rect width="16" height="16" fill="#000"></rect><path d="M0 7.500 H5.200 L7.500 3.400 L8.300 5.500 L10 12.500 L11.700 7.500 H16" stroke="#F01818" stroke-width="1.300" fill="none"></path></svg><span class="t" style="left: 29.5px; top: 6px; letter-spacing: -0.038px;">AutoEnginuity's Scan...</span></div>
<div class="tb" style="left:661px;width:158px"><svg style="left:10px;top:3px" width="16" height="17" viewBox="0 0 16 17"><path d="M5.500 14 L2.500 2 M8 14 L7.500 1.500 M10 14 L13 2" stroke="#E06818" stroke-width="1.600"></path><circle cx="2.300" cy="1.800" r="1.500" fill="#D85820"></circle><path d="M6.500 14 L5.500 3" stroke="#38A838" stroke-width="1.300"></path><path d="M9 14 L9.800 3" stroke="#F0D028" stroke-width="1.500"></path><path d="M11 13 L12 3" stroke="#E83828" stroke-width="1.200"></path><path d="M2.500 7 H13.500 L12 15.500 Q8 16.800 4 15.500Z" fill="#BFD4F4" fill-opacity="0.450" stroke="#A8B8D8" stroke-opacity="0.800"></path></svg><span class="t" style="left: 28px; letter-spacing: 0.127px;">hvbattery.bmp - Paint</span></div>
<!-- lang -->
<div style="left:885px;top:741px;width:15px;height:24px;background:#ECE9D8"></div>
<div style="left:887px;top:747px;width:13px;height:15px;background:#2D5FD0"></div>
<span class="t w" style="left:888px;top:747px;font-size:12px;line-height:14px;transform:scaleX(0.72);transform-origin:0 0">EN</span>
<!-- tray -->
<div style="left:913px;top:738px;width:111px;height:30px;background:linear-gradient(#1580DC 0,#2AA6F6 2px,#139AEE 5px,#0F96EC 22px,#0E86DA 28px,#0C70C0 30px);border-left:1px solid #12449E;box-sizing:border-box;box-shadow:inset 1px 0 0 #2AB4F8"></div>
<svg style="left:925px;top:744px" width="14" height="16" viewBox="0 0 14 16"><path d="M0.500 5.500 L4.500 0.500 L5.500 2.800 L9 1 L10.500 4.300 L7 6 L8 8.500 Z" fill="#34B83C" stroke="#1E8A2A" stroke-width="0.600"></path><path d="M3 10.500 L10.500 6.800 L12.800 10.300 L5 14.800 Z" fill="#C4C4D4" stroke="#585868" stroke-width="1"></path><path d="M5 11.500 L10 9" stroke="#70708A" stroke-width="1.200"></path></svg>
<svg style="left:942px;top:744px" width="17" height="17" viewBox="0 0 17 17"><defs><radialGradient id="spk" cx="0.400" cy="0.350" r="0.700"><stop offset="0" stop-color="#E8E8E8"></stop><stop offset="0.550" stop-color="#9A9A9A"></stop><stop offset="1" stop-color="#5C5C5C"></stop></radialGradient></defs><ellipse cx="6.300" cy="7.300" rx="5.800" ry="6.300" fill="url(#spk)"></ellipse><ellipse cx="5.500" cy="7.300" rx="2.600" ry="3" fill="#B8B8C8" stroke="#707078" stroke-width="0.800"></ellipse><path d="M8.500 14.500 Q12.500 13 14.500 9 M10.500 15.500 Q14 14 15.500 11" stroke="#A8B0F4" stroke-width="1" fill="none"></path></svg>
<svg style="left:959px;top:744px" width="18" height="17" viewBox="0 0 18 17"><path d="M1.500 0.500 Q2 7.500 5 9.500 L8 10" stroke="#101010" stroke-width="3.400" fill="none"></path><path d="M1.500 0.500 Q2 7.500 5 9.500 L8 10" stroke="#F4F4F4" stroke-width="1.800" fill="none"></path><path d="M5 8.500 L12.500 9.500 L12.500 13.800 L7 14.500 L4.500 11.500Z" fill="#E4E4E0" stroke="#101010" stroke-width="1"></path><path d="M11.500 10.500 L16.500 11.500 L16.500 14 L11.500 14Z" fill="#E8D820" stroke="#3A3A10" stroke-width="0.600"></path></svg>
<span class="t w" style="left: 985px; top: 747px; letter-spacing: 0.12px;">9:24</span>
</div>
</body></html>
